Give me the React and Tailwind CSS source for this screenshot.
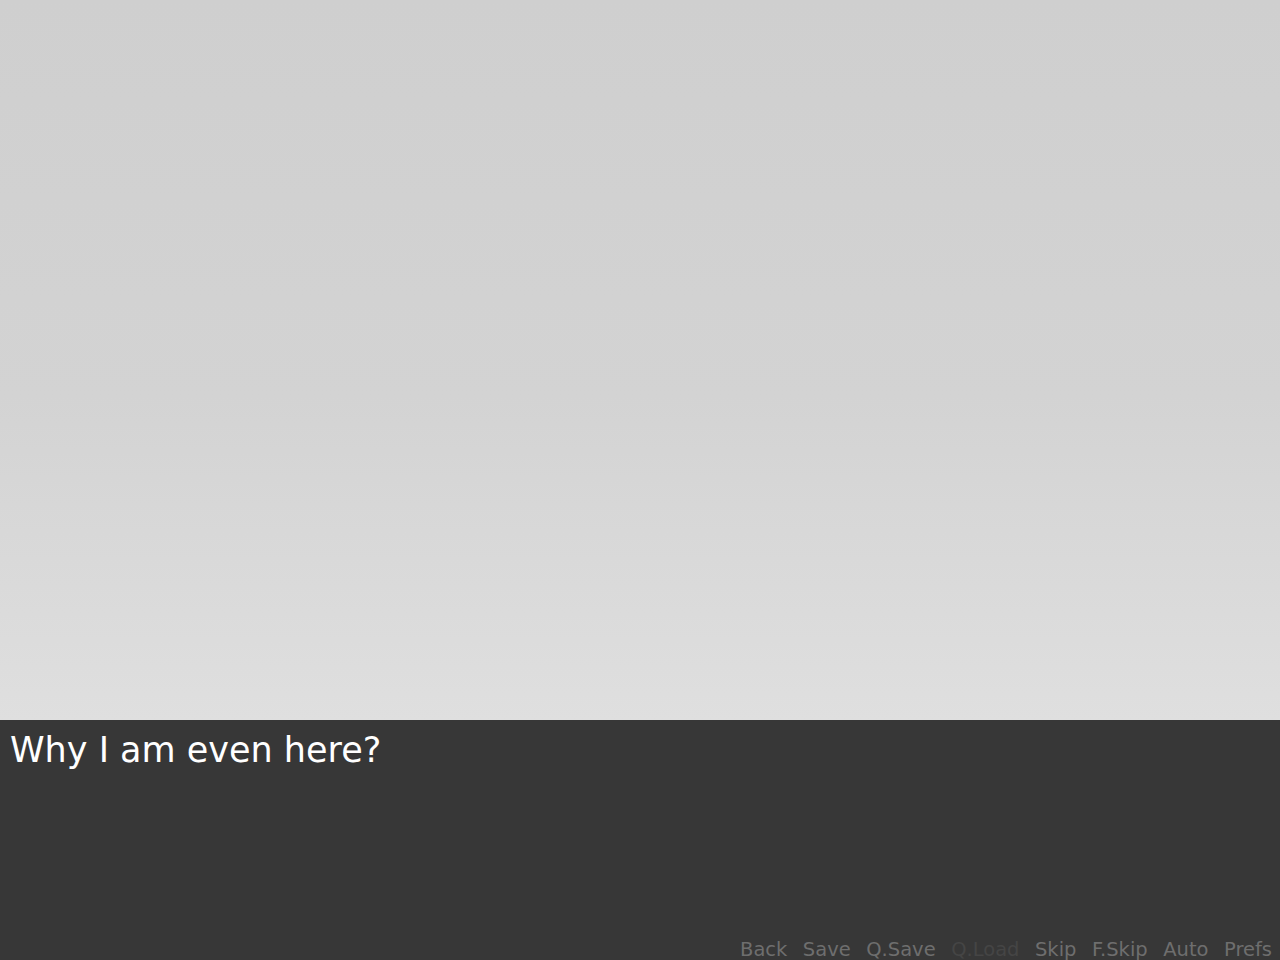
const quickMenu = [
  { label: 'Back', enabled: true },
  { label: 'Save', enabled: true },
  { label: 'Q.Save', enabled: true },
  { label: 'Q.Load', enabled: false },
  { label: 'Skip', enabled: true },
  { label: 'F.Skip', enabled: true },
  { label: 'Auto', enabled: true },
  { label: 'Prefs', enabled: true },
]

export default function App() {
  return (
    <div className="w-[1280px] h-[960px] flex flex-col overflow-hidden font-['DejaVu_Sans',sans-serif]">
      {/* scene */}
      <div className="h-[720px] shrink-0 bg-gradient-to-b from-[#cfcfcf] via-[#d3d3d3] via-55% to-[#dfdfdf]" />

      {/* say window */}
      <div className="flex-1 bg-[#373737] flex flex-col">
        <p className="pl-[10px] pt-[10px] text-[35px] leading-[normal] text-white">Why I am even here?</p>
        <div className="mt-auto flex justify-end gap-[15.5px] pr-[8px] -mb-px">
          {quickMenu.map(item => (
            <button
              key={item.label}
              className={`text-[19.5px] leading-[normal] ${item.enabled ? 'text-[#6e6e6e]' : 'text-[#454545]'}`}
            >
              {item.label}
            </button>
          ))}
        </div>
      </div>
    </div>
  )
}
